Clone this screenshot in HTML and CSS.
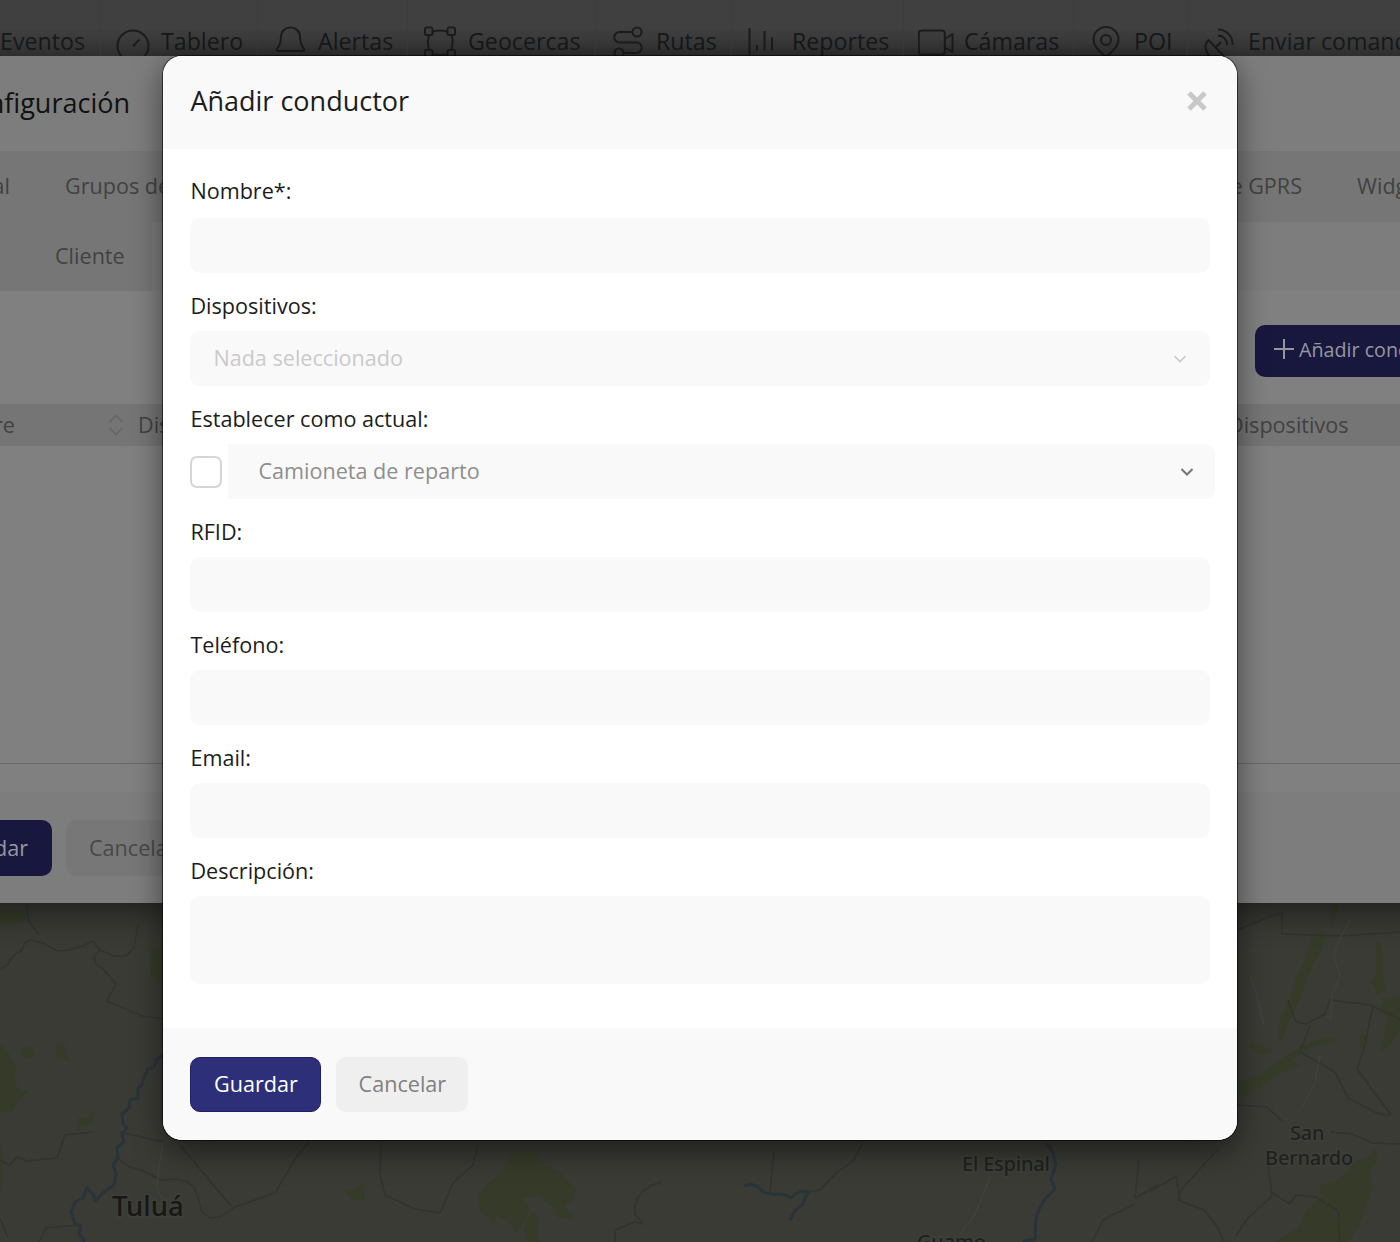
FILE: index.html
```html
<!DOCTYPE html>
<html lang="es">
<head>
<meta charset="utf-8">
<title>Añadir conductor</title>
<link rel="stylesheet" href="styles.css">
</head>
<body>
<nav class="toolbar">
  <div class="tool tool-first"><span>Eventos</span></div>
  <div class="tool"><svg class="tool-icon" viewBox="0 0 36 36"><circle cx="18" cy="20" r="15.5"/><path d="M18 20l6.500-6.500"/></svg><span>Tablero</span></div>
  <div class="tool"><svg class="tool-icon" viewBox="0 0 36 36"><path d="M18.500 1.500c-5.500 0-9.500 4-9.500 9.500 0 6-1.500 8.500-4 12-.8 1.400 0 2 1.500 2h24c1.500 0 2.300-.6 1.500-2-2.500-3.500-4-6-4-12 0-5.500-4-9.500-9.500-9.500z"/></svg><span>Alertas</span></div>
  <div class="tool"><svg class="tool-icon" viewBox="0 0 36 36"><rect x="3" y="1.500" width="7.500" height="7.500" rx="1.500"/><rect x="25.500" y="1.500" width="7.500" height="7.500" rx="1.500"/><rect x="3" y="24" width="7.500" height="7.500" rx="1.500"/><rect x="25.500" y="24" width="7.500" height="7.500" rx="1.500"/><path d="M10.500 5.500q7.500-2 15 0M29.500 9q2 7.500 0 15M7 9q-2 7.500 0 15M10.500 28q7.500 2 15 0"/></svg><span>Geocercas</span></div>
  <div class="tool"><svg class="tool-icon" viewBox="0 0 36 36"><circle cx="27" cy="6" r="4.500"/><circle cx="9" cy="27" r="4.500"/><path d="M22.500 6H9.500a5.200 5.200 0 0 0 0 10.500h17a5.200 5.200 0 0 1 0 10.500h-13"/></svg><span>Rutas</span></div>
  <div class="tool"><svg class="tool-icon" viewBox="0 0 36 36"><path d="M3.500 2v27M11 19v5.500M18.500 5v19.500M26 11.500v13"/></svg><span>Reportes</span></div>
  <div class="tool"><svg class="tool-icon" viewBox="0 0 36 36"><rect x="0.800" y="4.500" width="26" height="24" rx="3"/><path d="M27 13l7.500-5v18L27 21.500z"/></svg><span>Cámaras</span></div>
  <div class="tool"><svg class="tool-icon" viewBox="0 0 36 36"><circle cx="18" cy="14" r="5"/><path d="M18 31C11 25 5.500 20 5.500 13.500a12.500 12.500 0 0 1 25 0C30.500 20 25 25 18 31z"/></svg><span>POI</span></div>
  <div class="tool"><svg class="tool-icon" viewBox="0 0 36 36"><path d="M6.500 14c-5 5-3 12 1 16 5 3 10 3 15 1zM14 21l5-5M16 3.500A14.500 14.500 0 0 1 30.500 19M16 9.500a9 9 0 0 1 9 9.500"/></svg><span>Enviar comandos</span></div>
</nav>

<section class="settings">
  <header class="settings-head"><div class="cut cut-title">Configuración</div></header>
  <div class="tabs">
    <div class="cut cut-general">General</div>
    <div class="tab-groups">Grupos de conductores</div>
    <div class="tab-gprs">Plantillas de GPRS</div>
    <div class="tab-widgets">Widgets</div>
  </div>
  <div class="tabs-second"><div class="tab-client">Cliente</div></div>
  <div class="settings-body">
    <div class="actions">
      <div class="add-driver"><svg viewBox="0 0 20 20"><path d="M10 0v20M0 10h20"/></svg><span>Añadir conductor</span></div>
    </div>
    <div class="table-head">
      <div class="cut cut-name">Nombre</div>
      <svg class="sort" viewBox="0 0 16 22"><path d="M1.500 8L8 1.500 14.500 8M1.500 14L8 20.500 14.500 14"/></svg>
      <div class="col-device">Dispositivo</div>
      <div class="col-devices">Dispositivos</div>
    </div>
    <div class="table-body"></div>
  </div>
  <footer class="settings-foot">
    <div class="back-save">Guardar</div>
    <div class="back-cancel">Cancelar</div>
  </footer>
</section>

<div class="map">
  <svg viewBox="0 903 1400 339">
    <g class="forest">
      <path d="M0 911h30l-6 10-14 5-10-1zM0 1044l8 8 8 14-2 14 6 12 8-3v5l-9 5-6 12-13 2zM24 1046l8 2 4 8-8 4-7-5zM57 1043l8 2 5 17-14-4zM78 1118l8-1 8-6-3 14-9 2-5 5zM0 1140l3 20-1 28-2 4zM150 950l14-3v38l-13-6zM344 1189l9 0 10-4 1 15-12 0z"/>
      <path d="M506 1164l6-10 26-4 2 12 16 8 8 6 12 14-4 10-8 5 6 8 4 6-16-1-4-10-14-12-18 2 8 10-4 10-10 16-6-12-14-6-2 8-14-14-2-14 10-12 10-10zM526 1220l8-8 6 8-4 10 3 12h-11l-4-10z"/>
      <path d="M1332 903h6l-2 14-4 10-2-10zM1314 932l11-2-1 14-9 18-8 15-6 20-9 18-6 15-5 12-3-5 2-17 10-22 6-20 9-18zM1376 940l5 5 2 16-1 15 5 13-9 6-7-12 5-10zM1250 1041l12 5 11 6-13 3-10-8z"/>
      <path d="M1236 1082c28-5 40-20 52-28 17-10 30-18 46-16l2 5c-16-1-28 5-43 17l7 6c-27 6-38 27-64 33z"/>
      <path d="M1400 994l-17 6-2 10 7 11-8 30 10-5 10-17zM1360 1032l8 3-2 10-6 4zM1275 1242l22-13 10-20 15-12-3-12 17-4 11-8 3-9 20-8 5-8 3 12-9 12 4 15-6 17-8 22-10 16z"/>
    </g>
    <g class="road">
      <path d="M0 970l8-6 6-9 8-5 3-8 6-2 12 3 14 8 12-1 14-4 10-5 7 9 14 6 12 0 8-8 4-24M26 903l3 18 10 14M94 956l2 8 8 6 12 14-9 17 35 15 22 3M94 956l6-6M0 1160l9 5 8-8 10 4 30-3 8-23 28-3M120 1132l30 7 14 3M115 1156l12 10 14 4 20 10 13-1c26 1 23 20 28 33l8 6 10-1 15-10 40-14 20-34 14-17M180 1145l30 36 22 26M0 1218l8 20M39 1242l7-14 32-3"/>
      <path d="M381 1143l-1 32 5 20 30 14 25 4 13-30 20-18 5-20M774 1150l-4 44M808 1192l12-2 15-16 18-13 10-18M615 1242v-12l20-8 8 2-8-10c-2-14 6-26 26-32"/>
      <path d="M1237 930l45-18v22l58 2 60-4M1288 1000l8 22 10 2 19-10 5-14 40 5 30 14M1310 1026l-10 26 35 20 13 26 29 15 13 3M1373 1005l-8 40-8 24 34 46M1330 1132l22 2 20 9 28 1M1237 1105l30 2 16 15M1217 1150l-36 40-3 10 26 10 14 18 6 14M1150 1192l26-16 4 24M1236 1236l10-16 26-24-4-32M1272 1193l18 11 6-9 20 2 22 14 2 31"/>
      <path d="M1139 1160l-4 38 23-13M1135 1204l-32 16-11 22"/>
    </g>
    <g class="road-light"><path d="M163 1142l-4 24-2 22 8 16M1350 920l-10 18-6 18 6 20-8 20-2 25M1250 975l8 25 6 26M991 1176l-16 38-15 20M1320 1055l-5 28-15 28"/></g>
    <g class="river">
      <path d="M164 1055l-7 4-3 8-6 2-4 8-2 8-4 3v10l-8 2-1 8-7 6 1 9 4 5-5 6 2 8-7 6 1 10-5 6 3 9-2 12-10 7-9 9-2-7-6-6-4 10-8 4-4 10 4 12 6 2-2 8 5 6-3 12"/>
      <path d="M744 1186c9-4 14 0 18 5 10 7 18-1 29 7 5-6 12-8 17-6l-6 13c-8 4-9 10-12 15M1047 1143l6 10 3 12-5 14 4 10-10 10c-14 20-8 32-10 40l-12 2"/>
    </g>
    <g class="place">
      <text x="112" y="1216" class="place-city">Tuluá</text>
      <text x="962" y="1171">El Espinal</text>
      <text x="1290" y="1140">San</text>
      <text x="1265" y="1165">Bernardo</text>
      <text x="917" y="1249">Guamo</text>
    </g>
  </svg>
</div>

<form class="modal">
  <header class="modal-head">
    <h1>Añadir conductor</h1>
    <svg class="close" viewBox="0 0 20 20"><path d="M2 2l16 16M18 2L2 18"/></svg>
  </header>
  <div class="modal-body">
    <div class="field field-name"><label>Nombre*:</label><div class="input"></div></div>
    <div class="field"><label>Dispositivos:</label>
      <div class="input select empty"><span>Nada seleccionado</span><svg class="chevron" viewBox="0 0 12 8"><path d="M.5 1L6 6.500 11.500 1"/></svg></div></div>
    <div class="field"><label>Establecer como actual:</label>
      <div class="current"><div class="checkbox"></div>
        <div class="input select chosen"><span>Camioneta de reparto</span><svg class="chevron" viewBox="0 0 12 8"><path d="M.5 1L6 6.500 11.500 1"/></svg></div></div></div>
    <div class="field"><label>RFID:</label><div class="input"></div></div>
    <div class="field"><label>Teléfono:</label><div class="input"></div></div>
    <div class="field"><label>Email:</label><div class="input"></div></div>
    <div class="field"><label>Descripción:</label><div class="input area"></div></div>
  </div>
  <footer class="modal-foot">
    <button type="button" class="btn save">Guardar</button>
    <button type="button" class="btn cancel">Cancelar</button>
  </footer>
</form>
</body>
</html>
```
FILE: styles.css
```css
* { box-sizing: border-box; }
body {
  margin: 0;
  width: 1400px;
  height: 1242px;
  position: relative;
  overflow: hidden;
  display: flex;
  flex-direction: column;
  background: #3a3b35;
  font: 21.6px/30px "Open Sans", sans-serif;
  white-space: nowrap;
}
svg { display: block; flex: none; fill: none; }

/* Top navigation */
.toolbar {
  flex: none;
  height: 56px;
  overflow: hidden;
  display: grid;
  grid-template-columns: 100px 157px 150px 188px 136px 172px 170px 114px 213px;
  background: linear-gradient(#404040 30px, #343434);
  color: #17191b;
  font-size: 23.2px;
}
.tool {
  display: flex;
  gap: 10px;
  padding: 25px 0 0 14px;
  border-left: 1px solid #3d3d3d;
}
.tool-first { padding-left: 0; border: 0; }
.tool span { line-height: 32px; }
.tool-icon { width: 36px; height: 36px; margin-top: 1px; stroke: #1b1d1f; stroke-width: 2; stroke-linejoin: round; }

/* Settings window behind the dialog */
.settings {
  flex: none;
  height: 847px;
  margin: 0 -40px;
  padding: 0 40px;
  display: flex;
  flex-direction: column;
  background: #808080;
  color: #424242;
  position: relative;
  z-index: 1;
  box-shadow: 0 10px 30px rgba(0, 0, 0, .45);
}
.cut { display: flex; justify-content: flex-end; overflow: hidden; flex: none; }
.settings-head { height: 95px; padding-top: 27px; background: #7d7d7d; color: #111; font-size: 27px; line-height: 40px; }
.cut-title { width: 130px; }
.tabs { height: 71px; display: flex; align-items: center; padding-bottom: 2px; background: #767676; }
.tabs > div { flex: none; }
.cut-general { width: 10px; }
.tab-groups { margin-left: 55px; width: 1037px; }
.tab-gprs { width: 200px; text-align: right; }
.tab-widgets { margin-left: 55px; }
.tabs-second { height: 69px; background: #7d7d7d; }
.tab-client { width: 152px; height: 69px; padding-left: 55px; line-height: 67px; background: #767676; }
.settings-body { height: 501px; display: flex; flex-direction: column; }
.actions { height: 113px; padding-top: 34px; display: flex; justify-content: flex-end; }
.add-driver {
  width: 145px; height: 52px; overflow: hidden;
  display: flex; gap: 5px; padding: 10px 0 0 19px;
  border-radius: 10px 0 0 10px;
  background: #18183f; color: #96969f; font-size: 19.7px;
}
.add-driver svg { width: 20px; height: 20px; margin-top: 4px; stroke: #96969f; stroke-width: 2; }
.table-head { height: 42px; display: flex; align-items: center; background: #757575; padding-bottom: 1px; }
.cut-name { width: 15px; }
.sort { width: 16px; height: 22px; margin-left: 93px; stroke: #666; stroke-width: 1.7; }
.col-device { margin-left: 14px; width: 1090px; }
.table-body { flex: 1; border-bottom: 1px solid #686868; margin-bottom: 28px; }
.settings-foot { height: 111px; display: flex; gap: 14px; padding-top: 28px; background: #7d7d7d; line-height: 55px; }
.back-save { width: 52px; height: 56px; padding-right: 24px; display: flex; justify-content: flex-end; overflow: hidden; border-radius: 0 10px 10px 0; background: #18183f; color: #96969f; }
.back-cancel { width: 132px; height: 56px; padding-left: 23px; border-radius: 10px; background: #777; color: #484848; }

/* Map */
.map { flex: none; height: 339px; }
.map svg { width: 1400px; height: 339px; }
.forest { fill: #363b29; }
.road { stroke: #32332e; stroke-width: 1.5; stroke-linejoin: round; }
.road-light { stroke: #40413d; stroke-width: 1.5; }
.river { stroke: #28343a; stroke-width: 3; stroke-linejoin: round; }
.place text { fill: #20211f; stroke: #3e3f3a; stroke-width: 3; paint-order: stroke; font-family: "Noto Sans", sans-serif; font-size: 20px; font-weight: 500; letter-spacing: -.2px; }
.place .place-city { font-size: 27.5px; fill: #171816; letter-spacing: 0; }

/* Dialog */
.modal {
  position: absolute;
  z-index: 2;
  left: 163.4px;
  top: 56px;
  width: 1073.2px;
  height: 1083.5px;
  display: flex;
  flex-direction: column;
  border-radius: 19px;
  overflow: hidden;
  background: #fff;
  color: #1c1c1c;
  box-shadow: 0 0 0 1px rgba(0, 0, 0, .55), 0 10px 30px rgba(0, 0, 0, .5);
}
.modal-head { height: 93px; padding: 25px 30px 0 27px; display: flex; justify-content: space-between; background: #f9f9f9; }
h1 { margin: 0; font-size: 27px; line-height: 40px; font-weight: 400; }
.close { width: 20px; height: 20px; margin-top: 10px; stroke: #c8c8c8; stroke-width: 5; }
.modal-body { height: 879px; padding: 27px 27px 0; display: flex; flex-direction: column; gap: 18px; }
.field { display: flex; flex-direction: column; gap: 10px; }
.field-name { gap: 12px; }
label { height: 30px; }
.input { height: 55px; border-radius: 10px; background: #f9f9f9; }
.area { height: 88px; }
.select { display: flex; justify-content: space-between; align-items: center; padding: 0 24px 0 23px; }
.select span { line-height: 32px; padding-bottom: 2px; }
.chevron { width: 12px; height: 8px; stroke-width: 1.6; stroke: currentColor; }
.empty { color: #cacaca; }
.current { display: flex; align-items: center; gap: 6px; margin-right: -5px; }
.checkbox { width: 32px; height: 32px; border: 2px solid #d6d6d6; border-radius: 7px; flex: none; }
.chosen { flex: 1; padding: 0 22px 0 30px; border-radius: 0 10px 10px 0; color: #8e8e8e; }
.chosen .chevron { color: #777; stroke-width: 2; }
.modal-foot { flex: 1; padding: 29px 27px 0; display: flex; gap: 15px; background: #f9f9f9; }
.btn { height: 55px; padding: 0 0 1px; border-radius: 10px; font: inherit; }
.save { width: 131px; border: 1.5px solid #1f2060; background: #2d3079; color: #fff; }
.cancel { width: 132px; border: 0; background: #efefef; color: #808080; }
```
